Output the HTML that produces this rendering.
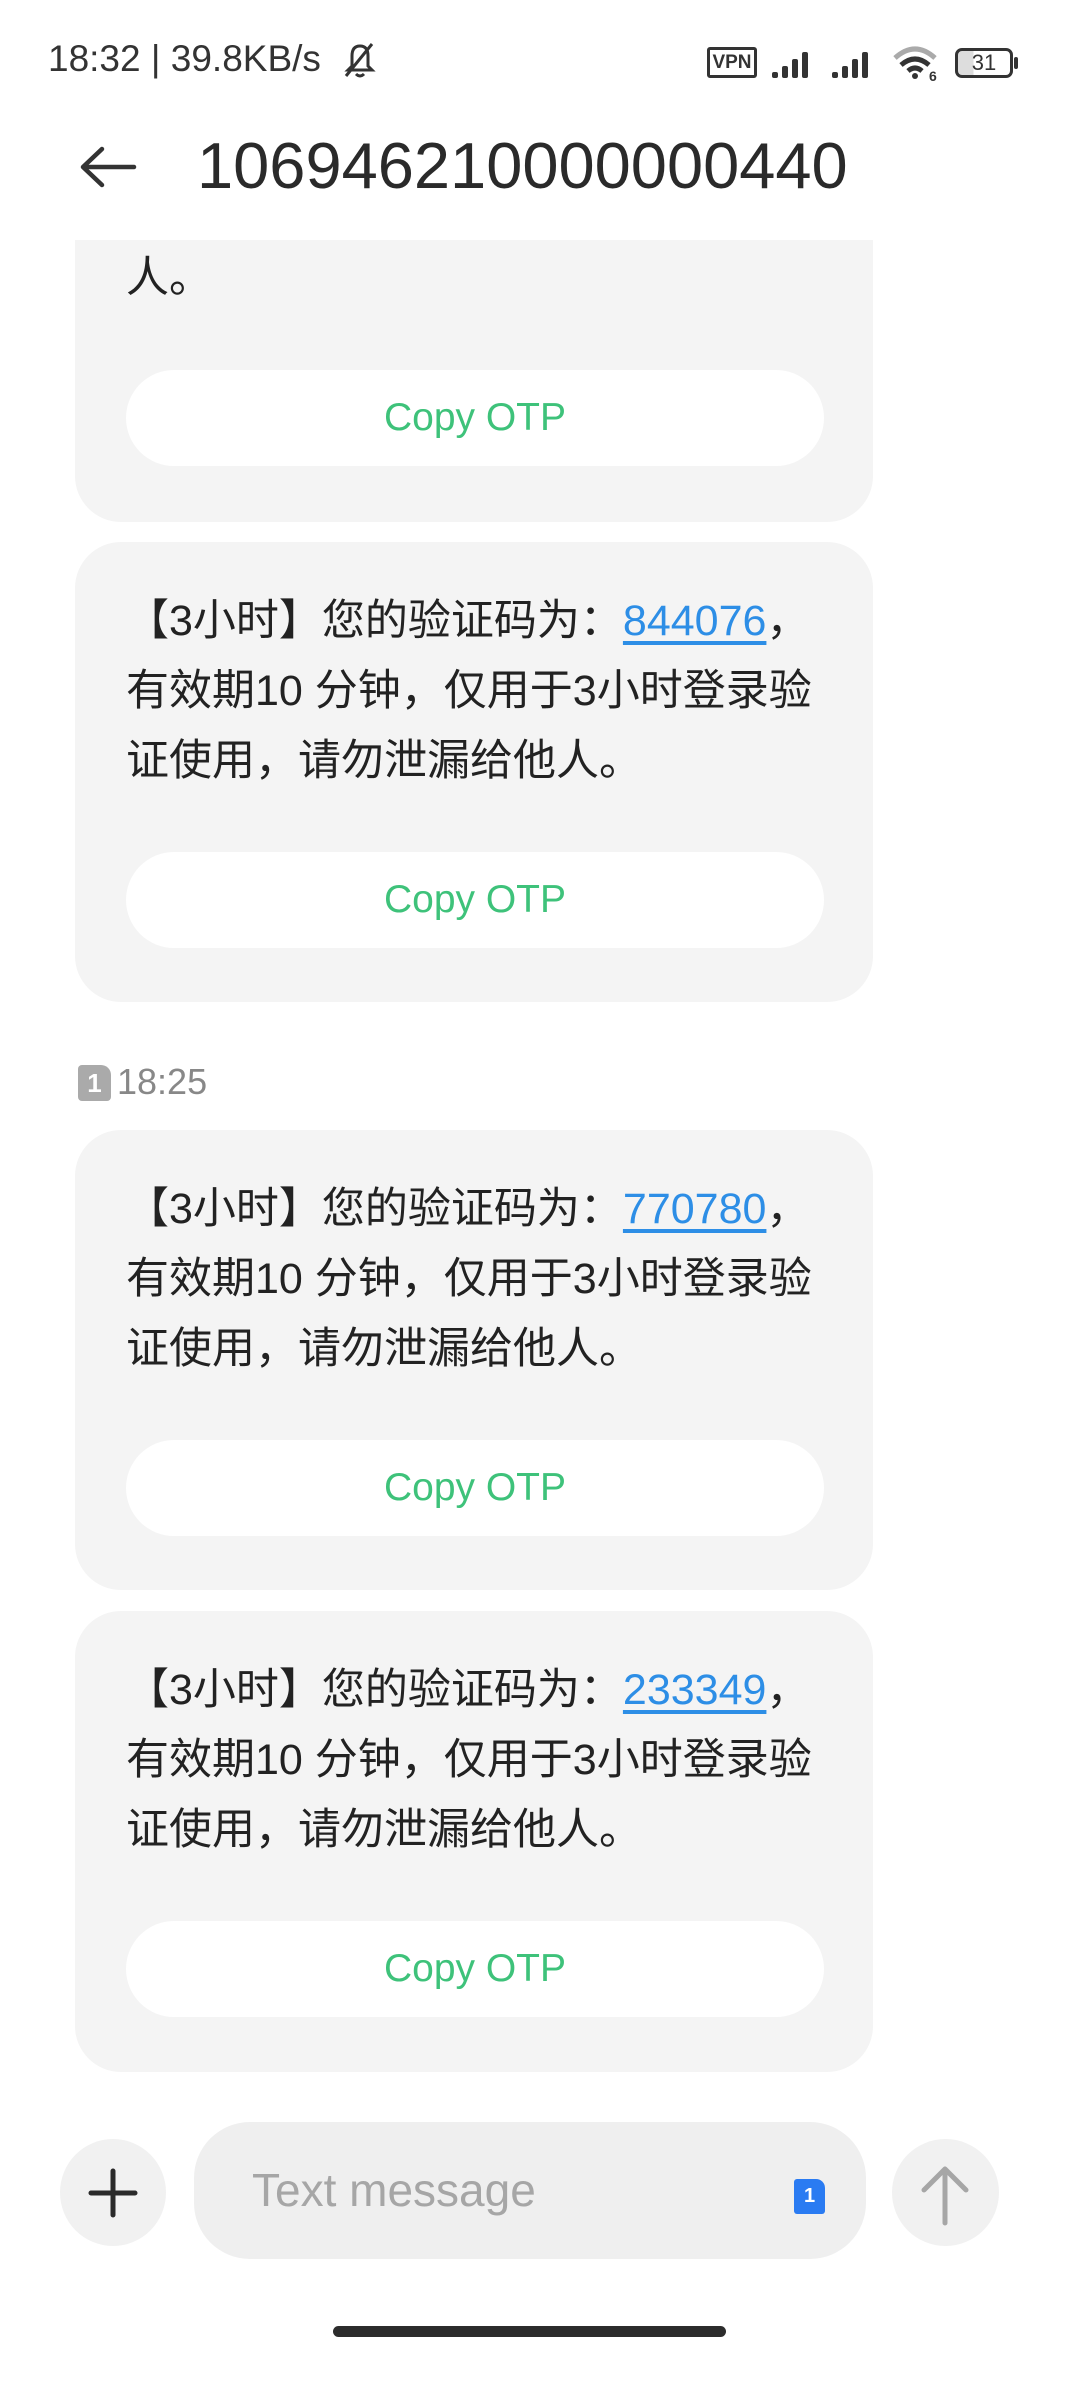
<!DOCTYPE html>
<html><head><meta charset="utf-8"><style>
*{margin:0;padding:0;box-sizing:border-box}
body{width:1080px;height:2400px;background:#fff;position:relative;overflow:hidden;font-family:"Liberation Sans","Noto Sans CJK SC",sans-serif;color:#222}
.abs{position:absolute}
.bubble{position:absolute;left:75px;width:798px;background:#f4f4f4;border-radius:46px}
.txt{position:absolute;left:51px;font-size:43px;line-height:70px;color:#222;white-space:nowrap}
.btn{position:absolute;left:51px;width:698px;height:96px;background:#fff;border-radius:48px;text-align:center;line-height:96px;font-size:39px;color:#3ec27a}
a{color:#2d8ee6;text-decoration:underline;text-underline-offset:6px}
</style></head><body>
<div class="abs" style="left:48px;top:38px;font-size:37px;color:#333;">18:32 | 39.8KB/s</div>
<svg class="abs" style="left:340px;top:40px" width="40" height="42" viewBox="0 0 40 42"><path d="M8 30 L12 26 L12 16 Q12 6 20 6 Q28 6 28 16 L28 26 L32 30 Z M16 34 Q20 38 24 34" fill="none" stroke="#333" stroke-width="3"/><path d="M6 36 L32 4" stroke="#333" stroke-width="3"/></svg>
<div class="abs" style="left:707px;top:47px;width:50px;height:31px;border:3px solid #333;border-radius:3px;font-size:19px;font-weight:bold;line-height:25px;text-align:center;color:#333">VPN</div>
<svg class="abs" style="left:772px;top:48px" width="110" height="32"><g fill="#333"><rect x="0" y="24" width="6" height="6" rx="2"/><rect x="10" y="18" width="6" height="12" rx="2"/><rect x="20" y="11" width="6" height="19" rx="2"/><rect x="30" y="4" width="6" height="26" rx="2"/><rect x="60" y="24" width="6" height="6" rx="2"/><rect x="70" y="18" width="6" height="12" rx="2"/><rect x="80" y="11" width="6" height="19" rx="2"/><rect x="90" y="4" width="6" height="26" rx="2"/></g></svg>
<svg class="abs" style="left:892px;top:44px" width="50" height="38"><path d="M3 14 Q23 -4 43 14" fill="none" stroke="#aaa" stroke-width="5"/><path d="M9 21 Q23 9 37 21" fill="none" stroke="#333" stroke-width="5"/><path d="M16 27 Q23 21 30 27" fill="none" stroke="#333" stroke-width="5"/><circle cx="23" cy="32" r="3" fill="#333"/><text x="37" y="37" font-size="14" font-weight="bold" fill="#333" font-family="Liberation Sans">6</text></svg>
<div class="abs" style="left:955px;top:48px;width:58px;height:30px;border:3px solid #333;border-radius:7px;font-size:22px;line-height:24px;text-align:center;color:#333;background:linear-gradient(90deg,#ddd 0 30%,#fff 30%)">31</div>
<div class="abs" style="left:1014px;top:57px;width:4px;height:12px;background:#333;border-radius:2px"></div>
<svg class="abs" style="left:78px;top:145px" width="60" height="44"><path d="M56 22 H6 M24 4 L5 22 L24 40" fill="none" stroke="#333" stroke-width="4.5" stroke-linecap="round" stroke-linejoin="round"/></svg>
<div class="abs" style="left:197px;top:128px;font-size:65px;line-height:76px;color:#2a2a2a;font-weight:500">106946210000000440</div>

<div class="bubble" style="top:240px;height:282px;border-radius:0 0 46px 46px"><div class="txt" style="top:3px">人。</div><div class="btn" style="top:130px">Copy OTP</div></div>

<div class="bubble" style="top:542px;height:460px"><div class="txt" style="top:44px">【3小时】您的验证码为：<a>844076</a>，<br>有效期10 分钟，仅用于3小时登录验<br>证使用，请勿泄漏给他人。</div><div class="btn" style="top:310px">Copy OTP</div></div>

<div class="abs" style="left:78px;top:1065px;width:33px;height:36px;background:#aaa;border-radius:4px 10px 4px 4px;color:#fff;font-size:26px;text-align:center;line-height:36px;font-weight:bold">1</div>
<div class="abs" style="left:117px;top:1060px;font-size:36px;color:#888;line-height:44px">18:25</div>

<div class="bubble" style="top:1130px;height:460px"><div class="txt" style="top:44px">【3小时】您的验证码为：<a>770780</a>，<br>有效期10 分钟，仅用于3小时登录验<br>证使用，请勿泄漏给他人。</div><div class="btn" style="top:310px">Copy OTP</div></div>

<div class="bubble" style="top:1611px;height:461px"><div class="txt" style="top:44px">【3小时】您的验证码为：<a>233349</a>，<br>有效期10 分钟，仅用于3小时登录验<br>证使用，请勿泄漏给他人。</div><div class="btn" style="top:310px">Copy OTP</div></div>

<div class="abs" style="left:60px;top:2139px;width:106px;height:107px;border-radius:50%;background:#f1f1f1"></div>
<svg class="abs" style="left:60px;top:2139px" width="106" height="107"><path d="M53 32 V76 M31 54 H75" stroke="#2a2a2a" stroke-width="5" stroke-linecap="round"/></svg>
<div class="abs" style="left:194px;top:2122px;width:672px;height:137px;border-radius:56px;background:#efefef"></div>
<div class="abs" style="left:252px;top:2160px;font-size:46px;line-height:60px;color:#a6a6a6">Text message</div>
<div class="abs" style="left:794px;top:2179px;width:31px;height:35px;background:#2a7bf2;border-radius:3px 9px 3px 3px;color:#fff;font-size:20px;font-weight:bold;text-align:center;line-height:35px">1</div>
<div class="abs" style="left:892px;top:2139px;width:107px;height:107px;border-radius:50%;background:#f1f1f1"></div>
<svg class="abs" style="left:892px;top:2139px" width="107" height="107"><path d="M53 84 V30 M32 51 L53 30 L74 51" fill="none" stroke="#a6a6a6" stroke-width="5" stroke-linecap="round" stroke-linejoin="round"/></svg>
<div class="abs" style="left:333px;top:2326px;width:393px;height:11px;border-radius:6px;background:#2c2c2c"></div>
</body></html>
